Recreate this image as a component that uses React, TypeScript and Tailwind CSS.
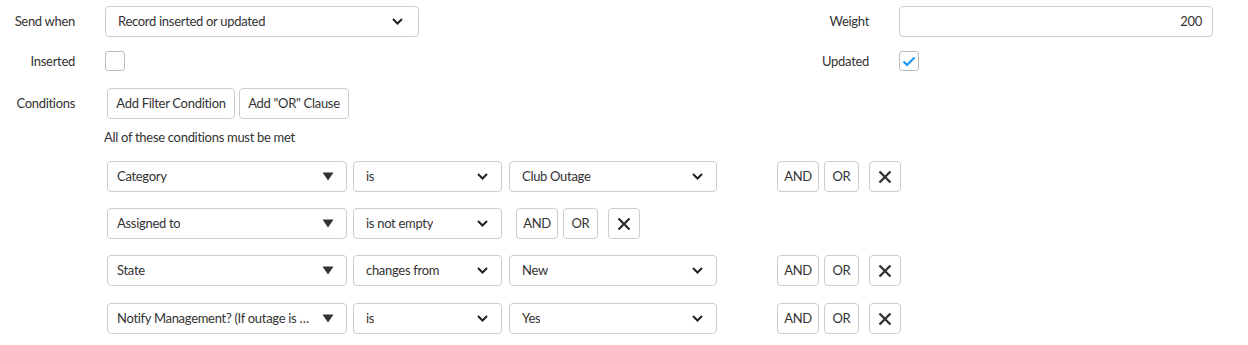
import React from "react";

const font = { fontFamily: "Lato, 'Noto Sans', sans-serif" };

function Chevron() {
  return (
    <svg width="11" height="7" viewBox="0 0 11 7" className="shrink-0">
      <path d="M1 1 L5.5 5.5 L10 1" fill="none" stroke="#222" strokeWidth="2" />
    </svg>
  );
}

function Triangle() {
  return (
    <svg width="12" height="9" viewBox="0 0 12 9" className="shrink-0">
      <path d="M0.5 0.5 L11.5 0.5 L6 8.5 Z" fill="#333" />
    </svg>
  );
}

function XIcon() {
  return (
    <svg width="14" height="14" viewBox="0 0 14 14">
      <path d="M1.5 1.5 L12.5 12.5 M12.5 1.5 L1.5 12.5" stroke="#333" strokeWidth="2.4" fill="none" />
    </svg>
  );
}

function Select({ text, w, pl = "pl-[12px]", pr = "pr-[13px]", tri = false }: { text: string; w: string; pl?: string; pr?: string; tri?: boolean }) {
  return (
    <div className={`${w} h-[31px] border border-[#ccc] rounded-[4px] bg-white flex items-center justify-between ${pl} ${pr} text-[13px] text-[#333]`}>
      <span className="truncate mr-2 pt-px">{text}</span>
      {tri ? <Triangle /> : <Chevron />}
    </div>
  );
}

function Btn({ children, w }: { children: React.ReactNode; w: string }) {
  return (
    <div className={`${w} h-[31px] border border-[#ccc] rounded-[4px] bg-white flex items-center justify-center text-[13px] text-[#333]`}>
      <span className="pt-px flex items-center">{children}</span>
    </div>
  );
}

function Actions() {
  return (
    <div className="flex items-center">
      <Btn w="w-[42px]">AND</Btn>
      <div className="ml-[5px]"><Btn w="w-[35px]">OR</Btn></div>
      <div className="ml-[10px]"><Btn w="w-[32px]"><XIcon /></Btn></div>
    </div>
  );
}

function CondRow({ field, op, value }: { field: string; op: string; value?: string }) {
  return (
    <div className="flex items-center h-[31px]">
      <Select text={field} w="w-[240px]" pl="pl-[9px]" pr="pr-[12px]" tri />
      <div className="ml-[6px]"><Select text={op} w="w-[149px]" /></div>
      {value !== undefined ? (
        <>
          <div className="ml-[7px]"><Select text={value} w="w-[208px]" /></div>
          <div className="ml-[60px]"><Actions /></div>
        </>
      ) : (
        <div className="ml-[14px]"><Actions /></div>
      )}
    </div>
  );
}

export default function App() {
  return (
    <div className="w-[1248px] h-[345px] bg-white text-[#333] text-[13px] tracking-[-0.3px] overflow-hidden" style={font}>
      <div className="pt-[6px] flex">
        {/* left column */}
        <div className="w-[794px] flex flex-col">
          <div className="flex items-center h-[31px]">
            <div className="w-[75px] text-right pt-px">Send when</div>
            <div className="ml-[30px]"><Select text="Record inserted or updated" w="w-[314px]" pr="pr-[15px]" /></div>
          </div>
          <div className="flex items-center h-[20px] mt-[14px]">
            <div className="w-[75px] text-right pt-px">Inserted</div>
            <div className="ml-[30px] w-[20px] h-[20px] border border-[#bbb] rounded-[3px] bg-white" />
          </div>
        </div>
        {/* right column */}
        <div className="flex flex-col">
          <div className="flex items-center h-[31px]">
            <div className="w-[75px] text-right pt-px">Weight</div>
            <div className="ml-[30px] w-[314px] h-[31px] border border-[#ccc] rounded-[4px] flex items-center justify-end pr-[10px]"><span className="pt-px">200</span></div>
          </div>
          <div className="flex items-center h-[20px] mt-[14px]">
            <div className="w-[75px] text-right pt-px">Updated</div>
            <div className="ml-[30px] w-[20px] h-[20px] border border-[#bbb] rounded-[3px] bg-white flex items-center justify-center">
              <svg width="14" height="11" viewBox="0 0 14 11">
                <path d="M1.5 5.5 L5 9 L12.5 1.5" fill="none" stroke="#2196f3" strokeWidth="2.2" />
              </svg>
            </div>
          </div>
        </div>
      </div>
      <div className="flex mt-[17px]">
        <div className="w-[75px] text-right pt-[7px] leading-[16px]">Conditions</div>
        <div className="ml-[32px] flex flex-col">
          <div className="flex">
            <Btn w="w-[128px]">Add Filter Condition</Btn>
            <div className="ml-[4px]"><Btn w="w-[110px]">Add "OR" Clause</Btn></div>
          </div>
          <div className="mt-[10px] -ml-[3px] leading-[16px]">All of these conditions must be met</div>
          <div className="mt-[16px] flex flex-col gap-[16px]">
            <CondRow field="Category" op="is" value="Club Outage" />
            <CondRow field="Assigned to" op="is not empty" />
            <CondRow field="State" op="changes from" value="New" />
            <div className="mt-[1px]">
              <CondRow field="Notify Management? (If outage is over 30 minutes)" op="is" value="Yes" />
            </div>
          </div>
        </div>
      </div>
    </div>
  );
}
